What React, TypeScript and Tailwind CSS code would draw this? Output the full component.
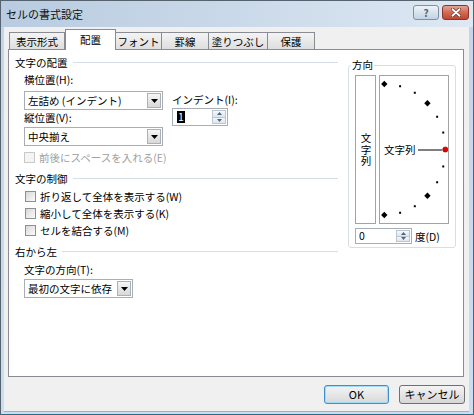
import React from "react";

function DownTri() {
  return (
    <svg width="7" height="4" viewBox="0 0 7 4">
      <path d="M0 0h7L3.5 4z" fill="#000" />
    </svg>
  );
}

function Select({ value, w }: { value: string; w: string }) {
  return (
    <div className={`flex h-[19px] items-stretch border border-[#a7aeb6] bg-white ${w}`}>
      <span className="flex flex-1 items-center pl-[3px] leading-[13px]">{value}</span>
      <span className="m-[1px] flex w-[14px] items-center justify-center border border-[#a9b1b9] bg-gradient-to-b from-[#f6f6f6] to-[#d8d8d8]">
        <DownTri />
      </span>
    </div>
  );
}

function SpinArrows() {
  return (
    <span className="my-[1px] mr-[1px] flex w-[14px] flex-col border border-[#bcc6d0]">
      <span className="flex flex-1 items-center justify-center border-b border-[#bcc6d0] bg-gradient-to-b from-[#f5f8fb] to-[#dde5ee]">
        <svg width="5" height="3" viewBox="0 0 5 3">
          <path d="M0 3h5L2.5 0z" fill="#4e6582" />
        </svg>
      </span>
      <span className="flex flex-1 items-center justify-center bg-gradient-to-b from-[#f5f8fb] to-[#dde5ee]">
        <svg width="5" height="3" viewBox="0 0 5 3">
          <path d="M0 0h5L2.5 3z" fill="#4e6582" />
        </svg>
      </span>
    </span>
  );
}

function Header({ children }: { children: React.ReactNode }) {
  return (
    <div className="flex h-[13px] items-center pr-[2px]">
      <span className="leading-[13px]">{children}</span>
      <span className="ml-[5px] h-px flex-1 bg-[#d5dfe5]" />
    </div>
  );
}

function Check({ label, disabled }: { label: string; disabled?: boolean }) {
  return (
    <div className="flex items-center gap-[4px]">
      <span
        className={
          disabled
            ? "h-[11px] w-[11px] shrink-0 border border-[#c8c8c8] bg-[#f4f4f4]"
            : "h-[11px] w-[11px] shrink-0 border border-[#8e8f8f] bg-gradient-to-br from-[#d8d8d8] to-[#fbfbfb]"
        }
      />
      <span className={disabled ? "leading-[13px] text-[#a0a0a0]" : "leading-[13px]"}>{label}</span>
    </div>
  );
}

function Tab({ label, w, active }: { label: string; w: string; active?: boolean }) {
  return (
    <div
      className={
        active
          ? `relative z-10 -mb-px flex h-[21px] items-center justify-center border border-b-0 border-[#898c95] bg-white pb-[1px] ${w}`
          : `-ml-px flex h-[17px] items-center justify-center border border-b-0 border-[#898c95] bg-gradient-to-b from-[#f4f4f4] to-[#dedede] ${w}`
      }
    >
      <span className="leading-[13px]">{label}</span>
    </div>
  );
}

function Dial() {
  const cx = 4.3;
  const cy = 73.5;
  const marks = [];
  for (let i = 0; i <= 12; i++) {
    const deg = 90 - i * 15;
    const a = (deg * Math.PI) / 180;
    const x = cx + 61 * Math.cos(a);
    const y = cy - 65.5 * Math.sin(a);
    if (deg === 0) {
      marks.push(<circle key={i} cx={x} cy={y} r="2.6" fill="#e80000" stroke="#7a0000" strokeWidth="0.6" />);
    } else if (deg % 45 === 0) {
      marks.push(
        <polygon key={i} points={`${x},${y - 3.2} ${x + 3.2},${y} ${x},${y + 3.2} ${x - 3.2},${y}`} fill="#000" />
      );
    } else {
      marks.push(<rect key={i} x={x - 1} y={y - 1} width="2" height="2" fill="#000" />);
    }
  }
  return (
    <svg className="absolute inset-0" width="68" height="147" viewBox="0 0 68 147">
      <line x1="38" y1="74" x2="62" y2="74" stroke="#000" strokeWidth="1" />
      {marks}
    </svg>
  );
}

export default function App() {
  return (
    <div className="flex h-[415px] w-[474px] flex-col border border-[#56626e] border-b-[#2b6b86] bg-gradient-to-b from-[#c3d5e9] to-[#c9def0] font-['Noto_Sans_CJK_JP','Noto_Sans',sans-serif] text-[10.5px] text-black">
      {/* title bar */}
      <div className="flex h-[26px] shrink-0 bg-gradient-to-r from-[#b8cbe0] to-[#dde8f3]">
        <span className="self-center pl-[5px] text-[11px] leading-[14px] text-[#111]">セルの書式設定</span>
        <div className="ml-auto mr-[4px] mt-[4px] flex gap-[3px]">
          <span className="flex h-[15px] w-[26px] items-center justify-center rounded-[3px] border border-[#7d90a6] bg-gradient-to-b from-[#eef3f8] to-[#c3d2e2] text-[10px] font-bold leading-[10px] text-[#52637a]">
            ?
          </span>
          <span className="flex h-[15px] w-[27px] items-center justify-center rounded-[3px] border border-[#8b3529] bg-gradient-to-b from-[#e4a393] via-[#d06a55] to-[#c04530]">
            <svg width="10" height="9" viewBox="0 0 10 9">
              <path d="M1.5 1.2L8.5 7.8M8.5 1.2L1.5 7.8" stroke="#5b1a10" strokeWidth="3.2" strokeLinecap="round" />
              <path d="M1.5 1.2L8.5 7.8M8.5 1.2L1.5 7.8" stroke="#fff" strokeWidth="2" strokeLinecap="round" />
            </svg>
          </span>
        </div>
      </div>

      {/* body */}
      <div className="mb-[2px] ml-[3px] mr-[4px] flex flex-1 flex-col border-b border-[#6cc2e2] bg-[#f0f0f0]">
        <div className="ml-[6px] flex h-[22px] items-end">
          <Tab label="表示形式" w="w-[56px]" />
          <Tab label="配置" w="w-[51px]" active />
          <Tab label="フォント" w="w-[47px]" />
          <Tab label="罫線" w="w-[48px]" />
          <Tab label="塗りつぶし" w="w-[60px]" />
          <Tab label="保護" w="w-[48px]" />
        </div>

        <div className="ml-[4px] flex h-[328px] w-[456px] border border-[#898c95] bg-white">
          {/* left column */}
          <div className="flex w-[331px] flex-col pl-[6px]">
            <div className="mt-[6px]">
              <Header>文字の配置</Header>
            </div>
            <div className="mt-[4px] flex gap-[9px] pl-[9px]">
              <div className="flex flex-col">
                <span className="h-[13px] leading-[13px]">横位置(H):</span>
                <div className="mt-[5px]">
                  <Select value="左詰め (インデント)" w="w-[139px]" />
                </div>
                <span className="mt-[1px] h-[13px] leading-[13px]">縦位置(V):</span>
                <div className="mt-[3px]">
                  <Select value="中央揃え" w="w-[139px]" />
                </div>
              </div>
              <div className="mt-[20px] flex flex-col">
                <span className="h-[13px] leading-[13px]">インデント(I):</span>
                <div className="mt-[2px] flex h-[18px] w-[56px] border border-[#a7aeb6] bg-white">
                  <span className="flex flex-1 items-center pl-[4px]">
                    <span className="bg-black px-[1px] leading-[12px] text-white">1</span>
                  </span>
                  <SpinArrows />
                </div>
              </div>
            </div>
            <div className="mt-[5px] flex h-[12px] items-center pl-[9px]">
              <Check label="前後にスペースを入れる(E)" disabled />
            </div>

            <div className="mt-[9px]">
              <Header>文字の制御</Header>
            </div>
            <div className="mt-[5px] flex flex-col gap-[4px] pl-[10px]">
              <Check label="折り返して全体を表示する(W)" />
              <Check label="縮小して全体を表示する(K)" />
              <Check label="セルを結合する(M)" />
            </div>

            <div className="mt-[8px]">
              <Header>右から左</Header>
            </div>
            <span className="mt-[5px] h-[13px] pl-[9px] leading-[13px]">文字の方向(T):</span>
            <div className="mt-[3px] pl-[9px]">
              <Select value="最初の文字に依存" w="w-[109px]" />
            </div>
          </div>

          {/* right column: 方向 */}
          <div className="relative ml-[8px] mt-[15px] h-[183px] w-[108px] rounded-[3px] border border-[#d5dfe5] pl-[6px] pt-[9px]">
            <span className="absolute -top-[8px] left-[2px] bg-white px-[1px] leading-[13px]">方向</span>
            <div className="flex gap-[3px]">
              <div className="flex h-[149px] w-[21px] items-center justify-center border border-[#a3a3a3] pt-[1px]">
                <span className="leading-[12px] tracking-[1px] [writing-mode:vertical-rl]">文字列</span>
              </div>
              <div className="relative h-[149px] w-[70px] border border-[#a3a3a3]">
                <Dial />
                <span className="absolute left-[4px] top-[67px] leading-[13px]">文字列</span>
              </div>
            </div>
            <div className="mt-[4px] flex items-center">
              <div className="flex h-[16px] w-[57px] border border-[#a7aeb6] bg-white">
                <span className="flex flex-1 items-center pl-[3px] leading-[12px]">0</span>
                <SpinArrows />
              </div>
              <span className="ml-[3px] leading-[13px]">度(D)</span>
            </div>
          </div>
        </div>

        <div className="mr-[4px] mt-[8px] flex justify-end gap-[10px]">
          <button className="flex h-[19px] w-[65px] items-center justify-center rounded-[3px] border border-[#3c8fd3] bg-gradient-to-b from-[#f4f4f4] to-[#d9d9d9] shadow-[inset_0_0_0_1px_#9fdcf9] text-[11px] leading-[13px]">
            OK
          </button>
          <button className="flex h-[19px] w-[66px] items-center justify-center rounded-[3px] border border-[#707070] bg-gradient-to-b from-[#f4f4f4] to-[#d6d6d6] text-[11px] leading-[13px]">
            キャンセル
          </button>
        </div>
      </div>
    </div>
  );
}
